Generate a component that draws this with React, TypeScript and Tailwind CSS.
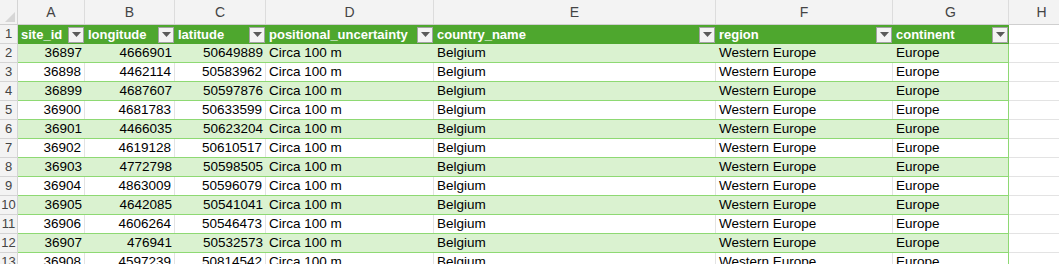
import type { ReactNode } from "react";

/* Sheet data ------------------------------------------------------------ */

const cols = [
  { letter: "A", name: "site_id", w: "w-[67px]" },
  { letter: "B", name: "longitude", w: "w-[90px]" },
  { letter: "C", name: "latitude", w: "w-[91px]" },
  { letter: "D", name: "positional_uncertainty", w: "w-[168px]" },
  { letter: "E", name: "country_name", w: "w-[282px]" },
  { letter: "F", name: "region", w: "w-[177px]" },
  { letter: "G", name: "continent", w: "w-[116px]" },
];

const rows: [number, number, number][] = [
  [36897, 4666901, 50649889],
  [36898, 4462114, 50583962],
  [36899, 4687607, 50597876],
  [36900, 4681783, 50633599],
  [36901, 4466035, 50623204],
  [36902, 4619128, 50610517],
  [36903, 4772798, 50598505],
  [36904, 4863009, 50596079],
  [36905, 4642085, 50541041],
  [36906, 4606264, 50546473],
  [36907, 476941, 50532573],
  [36908, 4597239, 50814542],
];

/* Bits ------------------------------------------------------------------ */

function FilterButton() {
  return (
    <span className="ml-auto mr-[1px] flex size-[16px] shrink-0 items-center justify-center border border-[#a3a3a3] bg-[#f3f3f3]">
      <svg width="9" height="5" viewBox="0 0 9 5" aria-hidden>
        <polygon points="0,0 9,0 4.5,5" fill="#5a5a5a" />
      </svg>
    </span>
  );
}

function RowNum({ n }: { n: number }) {
  return (
    <div className="flex w-[18px] shrink-0 items-center justify-center border-r border-b border-[#d4d4d4] bg-[#f3f3f3] text-[13px] text-[#444]">
      {n}
    </div>
  );
}

function Cell({
  w,
  right,
  green,
  children,
}: {
  w: string;
  right?: boolean;
  green?: boolean;
  children: ReactNode;
}) {
  return (
    <div
      className={[
        "flex shrink-0 items-center overflow-hidden whitespace-nowrap px-[3px]",
        w,
        right ? "justify-end" : "justify-start",
        green ? "" : "border-r border-[#e3e3e3]",
      ].join(" ")}
    >
      {children}
    </div>
  );
}

/* Sheet ----------------------------------------------------------------- */

export default function App() {
  return (
    <div
      className="h-[264px] w-[1059px] overflow-hidden bg-white text-[13.5px] text-black"
      style={{ fontFamily: '"Liberation Sans", Arial, sans-serif' }}
    >
      {/* Column letters */}
      <div className="flex h-[25px] border-b border-[#cfcfcf] bg-[#f3f3f3] text-[14px] text-[#444]">
        <div className="relative w-[18px] shrink-0 border-r border-[#d4d4d4]">
          <svg className="absolute right-[2px] bottom-[2px]" width="10" height="10" viewBox="0 0 10 10" aria-hidden>
            <polygon points="10,0 10,10 0,10" fill="#d6d6d6" />
          </svg>
        </div>
        {cols.map((c) => (
          <div
            key={c.letter}
            className={`flex shrink-0 items-center justify-center border-r border-[#dcdcdc] ${c.w}`}
          >
            {c.letter}
          </div>
        ))}
        <div className="flex w-[66px] shrink-0 items-center justify-center border-r border-[#dcdcdc]">H</div>
      </div>

      {/* Table header row */}
      <div className="flex h-[19px]">
        <RowNum n={1} />
        <div className="flex bg-[#4ea72e] text-[13px] font-bold text-white">
          {cols.map((c) => (
            <div key={c.name} className={`flex shrink-0 items-center pl-[3px] ${c.w}`}>
              <span className="whitespace-nowrap">{c.name}</span>
              <FilterButton />
            </div>
          ))}
        </div>
        <div className="flex-1 border-b border-[#e3e3e3]" />
      </div>

      {/* Data rows */}
      {rows.map((r, i) => {
        const green = i % 2 === 0;
        return (
          <div key={r[0]} className="flex h-[19px]">
            <RowNum n={i + 2} />
            <div
              className={`flex border-b border-r border-[#8ed973] ${green ? "bg-[#daf2d0]" : "bg-white"}`}
            >
              <Cell w={cols[0].w} right green={green}>{r[0]}</Cell>
              <Cell w={cols[1].w} right green={green}>{r[1]}</Cell>
              <Cell w={cols[2].w} right green={green}>{r[2]}</Cell>
              <Cell w={cols[3].w} green={green}>Circa 100 m</Cell>
              <Cell w={cols[4].w} green={green}>Belgium</Cell>
              <Cell w={cols[5].w} green={green}>Western Europe</Cell>
              <div className="flex w-[115px] shrink-0 items-center px-[3px]">Europe</div>
            </div>
            <div className="w-[66px] shrink-0 border-b border-r border-[#e3e3e3]" />
          </div>
        );
      })}
    </div>
  );
}
